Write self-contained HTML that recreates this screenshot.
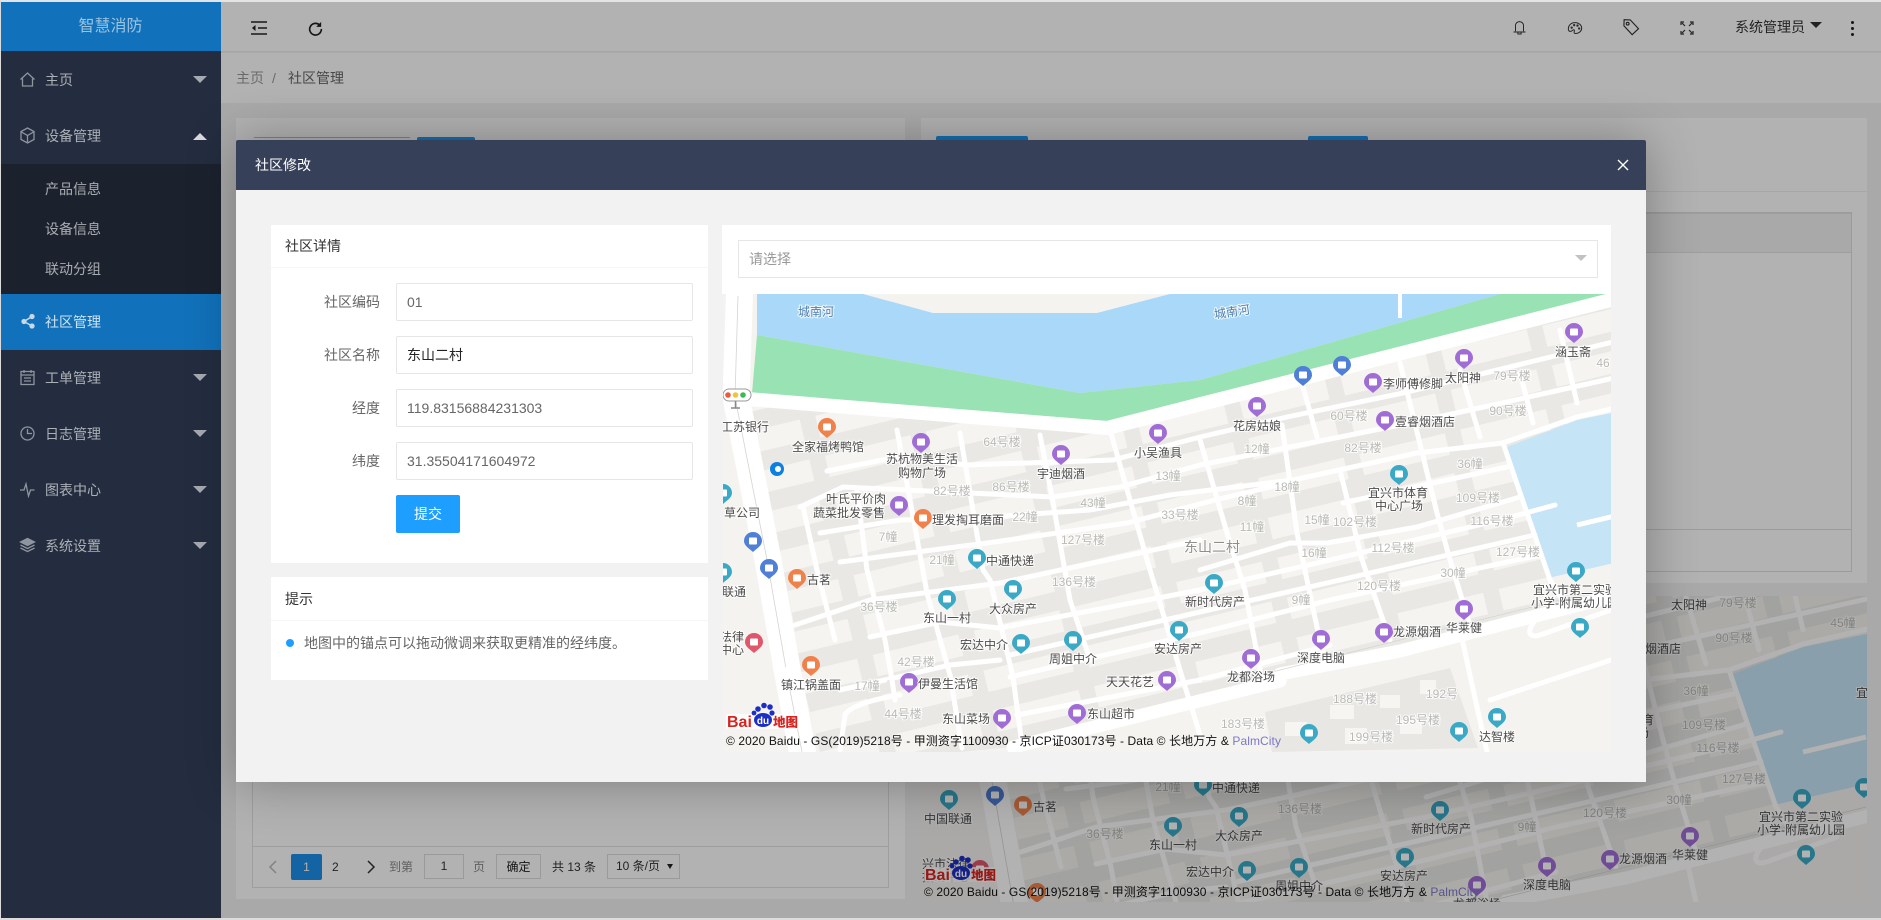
<!DOCTYPE html>
<html lang="zh-CN"><head><meta charset="utf-8"><title>社区管理</title>
<style>
html,body{margin:0;padding:0;width:1881px;height:920px;overflow:hidden;background:#f2f2f2}
body{font:14px "Liberation Sans","Noto Sans CJK SC",sans-serif;color:#333;position:relative}
div,span,svg{position:absolute;box-sizing:border-box}
.t{white-space:nowrap;line-height:20px}
#ov{left:0;top:0;width:1881px;height:920px;background:rgba(0,0,0,.3)}
#sb{left:0;top:0;width:221px;height:920px;background:#232d3f;color:rgba(255,255,255,.62)}
#sb .i{left:45px}
#sb svg{left:19px;width:17px;height:17px;fill:none;stroke:#8f959e;stroke-width:1.3}
.ar{left:193px;width:0;height:0;border-left:7px solid transparent;border-right:7px solid transparent;border-top:7px solid #a5a9b0}
.ar.u{border-top:0;border-bottom:7px solid #a5a9b0}
.card{background:#fff}
.inp{left:396px;width:297px;height:38px;background:#fff;border:1px solid #e6e6e6;border-radius:2px;padding-left:10px;line-height:36px;color:#666;font-size:14px}
.lb{width:80px;left:300px;text-align:right;color:#666;line-height:20px}
.l{font:12px "Liberation Sans","Noto Sans CJK SC",sans-serif;fill:#4c4c4c;text-anchor:middle;paint-order:stroke;stroke:#fff;stroke-width:2px;stroke-opacity:.8}
.g{fill:#b9b9b5}
.c{font:12px "Liberation Sans","Noto Sans CJK SC",sans-serif;fill:#111;letter-spacing:.09px}
.hi{fill:none;stroke:#333;stroke-width:1.2}
</style></head><body>

<!-- page behind overlay -->
<div style="left:221px;top:0;width:1660px;height:52px;background:#fff;border-bottom:1px solid #eee"></div>
<div style="left:221px;top:53px;width:1660px;height:50px;background:#fff"></div>
<svg style="left:251px;top:21px" width="16" height="14" viewBox="0 0 16 14"><path d="M0 1h16M7 7h9M0 13h16" stroke="#222" stroke-width="1.600"/><path d="M4.500 4L1 7l3.500 3z" fill="#222"/></svg>
<svg style="left:308px;top:21px" width="15" height="15" viewBox="0 0 18 18"><path d="M14.500 5.500A7 7 0 1 0 16 9.500" fill="none" stroke="#222" stroke-width="2"/><path d="M15.800 1v6h-6z" fill="#222"/></svg>
<svg class="hi" style="left:1512px;top:20px" width="15" height="16" viewBox="0 0 18 20"><path d="M4 14V7a5 5 0 0 1 10 0v7M1.500 15h15M7 15v2.500h4V15"/></svg>
<svg class="hi" style="left:1567px;top:21px" width="16" height="15" viewBox="0 0 18 18"><path d="M9 2C4 2 1 5.500 1 9.500c0 2 1.200 3 2.500 3 2 0 2.500-2 4-2 1 0 .8 1.500.5 2.500-.3 1 .2 2 1.500 2C14 15 17 12 17 8.500 17 5 13.500 2 9 2z"/><circle cx="5" cy="8" r=".8"/><circle cx="8" cy="5" r=".8"/><circle cx="12" cy="5.500" r=".8"/><circle cx="14" cy="9" r=".8"/></svg>
<svg class="hi" style="left:1622px;top:18px" width="18" height="18" viewBox="0 0 19 19"><path d="M2 2h6.500l9 9-6.500 6.500-9-9z" transform="rotate(2 9 9)"/><circle cx="6" cy="6" r="1.500"/></svg>
<svg class="hi" style="left:1680px;top:21px" width="14" height="14" viewBox="0 0 14 14" stroke-width="1"><path d="M1 4V1h3M10 1h3v3M13 10v3h-3M4 13H1v-3M2 2l3 3M12 2L9 5M12 12L9 9M2 12l3-3"/></svg>
<div class="t" style="left:1735px;top:17px;color:#333">系统管理员</div>
<div class="ar" style="left:1810px;top:22px;border-left:6px solid transparent;border-right:6px solid transparent;border-top:6px solid #333"></div>
<div style="left:1851px;top:21px;width:3px;height:3px;border-radius:50%;background:#222;box-shadow:0 6px 0 #222,0 12px 0 #222"></div>
<div class="t" style="left:236px;top:68px;color:#999">主页</div>
<div class="t" style="left:272px;top:68px;color:#999">/</div>
<div class="t" style="left:288px;top:68px;color:#666">社区管理</div>

<!-- left card behind -->
<div class="card" style="left:236px;top:118px;width:669px;height:781px"></div>
<div style="left:254px;top:137px;width:156px;height:1px;background:#bbb"></div>
<div style="left:417px;top:137px;width:58px;height:10px;background:#1e9fff;border-radius:2px"></div>
<div style="left:252px;top:150px;width:637px;height:738px;border:1px solid #e2e2e2"></div>
<div style="left:253px;top:846px;width:635px;height:1px;background:#e2e2e2"></div>
<svg style="left:268px;top:860px" width="10" height="14" viewBox="0 0 10 14"><path d="M8 1L2 7l6 6" fill="none" stroke="#bbb" stroke-width="1.500"/></svg>
<div style="left:291px;top:854px;width:31px;height:26px;background:#1e8fe8;border-radius:2px;color:#fff;text-align:center;line-height:26px;font-size:12px">1</div>
<div class="t" style="left:332px;top:857px;font-size:12px">2</div>
<svg style="left:366px;top:860px" width="10" height="14" viewBox="0 0 10 14"><path d="M2 1l6 6-6 6" fill="none" stroke="#333" stroke-width="1.500"/></svg>
<div class="t" style="left:389px;top:857px;font-size:12px;color:#888">到第</div>
<div style="left:424px;top:854px;width:40px;height:25px;border:1px solid #ddd;text-align:center;line-height:23px;font-size:12px">1</div>
<div class="t" style="left:473px;top:857px;font-size:12px;color:#888">页</div>
<div style="left:496px;top:854px;width:45px;height:25px;border:1px solid #ddd;text-align:center;line-height:25px;font-size:12px;color:#222">确定</div>
<div class="t" style="left:552px;top:857px;font-size:12px">共 13 条</div>
<div style="left:607px;top:854px;width:73px;height:25px;border:1px solid #ddd;line-height:23px;font-size:12px;padding-left:8px;color:#333">10 条/页</div>
<div style="left:667px;top:864px;width:0;height:0;border-left:3px solid transparent;border-right:3px solid transparent;border-top:5px solid #222"></div>

<!-- right card behind -->
<div class="card" style="left:921px;top:118px;width:946px;height:465px"></div>
<div style="left:936px;top:136px;width:92px;height:20px;background:#1e9fff;border-radius:2px"></div>
<div style="left:1308px;top:136px;width:60px;height:20px;background:#1e9fff;border-radius:2px"></div>
<div style="left:921px;top:191px;width:946px;height:1px;background:#f0f0f0"></div>
<div style="left:936px;top:212px;width:916px;height:360px;border:1px solid #dedede"></div>
<div style="left:937px;top:213px;width:914px;height:40px;background:#f2f2f2;border-bottom:1px solid #e2e2e2;border-top:1px solid #e2e2e2"></div>
<div style="left:937px;top:529px;width:914px;height:1px;background:#e0e0e0"></div>

<!-- shared map defs -->
<svg style="left:0;top:0" width="0" height="0">
<defs>
<pattern id="bp" width="104" height="41" patternUnits="userSpaceOnUse" patternTransform="rotate(-13.500 1000 500)">
<rect x="8" y="6" width="88" height="22" fill="#f6f4f0"/>
</pattern>
<g id="pin"><path d="M-9 0a9 9 0 1 1 18 0c0 5-6 8-9 11c-3-3-9-6-9-11z"/><rect x="-4" y="-3.500" width="8" height="7" rx="1" fill="#fff"/></g>
<g id="bl">
<rect x="726" y="714" width="72" height="15" rx="2" fill="#fff" opacity=".75"/>
<text x="727" y="727" style="font:bold 16px 'Liberation Sans',sans-serif;fill:#d8231f;paint-order:stroke;stroke:#fff;stroke-width:2.500px">Bai</text>
<g fill="#1c2fc4"><ellipse cx="763" cy="720" rx="9" ry="7"/><circle cx="758" cy="709" r="2.800"/><circle cx="764" cy="705.500" r="2.800"/><circle cx="770" cy="707" r="2.800"/><circle cx="772" cy="713" r="2.600"/><circle cx="754" cy="713" r="2.400"/></g>
<text x="763" y="724" text-anchor="middle" style="font:bold 10px 'Liberation Sans',sans-serif;fill:#fff">du</text>
<text x="773" y="726.500" style="font:900 12.500px 'Noto Sans CJK SC',sans-serif;fill:#d8231f;paint-order:stroke;stroke:#fff;stroke-width:1.500px">地图</text>
</g>
<g id="mb">
<rect x="690" y="290" width="960" height="390" fill="#f5f3ef"/>
<path d="M757 294H863L933 313H1097L1170 294H1500L1200 380L1080 393L757 335Z" fill="#a9d8f9"/>
<path d="M757 335L1080 393L1200 380L1500 294H1610L1200 397L1107 421L752 393Z" fill="#99e2b4"/>
<rect x="1398" y="294" width="4" height="24" fill="#fff"/>
<path id="gp" d="M752 405L1107 435L1650 295V420L1510 450L1550 585L1611 600L1280 680H802L790 600L745 420Z" fill="#e9e8e5"/>
<path d="M752 405L1107 435L1650 295V420L1510 450L1550 585L1611 600L1280 680H802L790 600L745 420Z" fill="url(#bp)"/>
<path d="M1507 447L1577 420L1650 405V555L1548 578Z" fill="#c5e4f5"/>
<path d="M1577 525L1640 510" stroke="#fff" stroke-width="5"/>
<g fill="none" stroke="#fff" stroke-linejoin="round" stroke-linecap="round">
<path stroke-width="14" d="M748 399L1107 428L1650 290"/>
<path stroke-width="27" d="M740 280L736 397L768 560L789 680"/>
<path stroke-width="13" d="M1280 674L1400 651L1520 620L1650 587"/>
<g stroke-width="5">
<path d="M827 471L897 457L967 465L1113 460L1200 437L1287 417L1403 393L1567 353L1650 333"/>
<path d="M800 507L843 487L907 490L1053 497L1120 487L1200 465L1290 447L1415 422L1470 410L1560 390L1650 370"/>
<path d="M820 533L900 520L990 517L1090 510L1170 495L1293 480L1417 453L1503 443L1577 417L1650 400"/>
<path d="M840 562L987 543L1127 523L1215 500L1283 484"/>
<path d="M1343 503L1433 483L1507 467"/>
<path d="M1200 570L1290 543L1327 543L1417 527L1520 497"/>
<path d="M795 625L870 600L1000 583L1200 540"/>
<path d="M870 637L940 622L1000 628L1200 590L1330 560L1500 520L1555 505"/>
<path d="M1010 655L1200 612L1340 580L1535 535"/>
<path d="M1010 677L1200 633L1330 600L1540 555"/>
<path d="M1200 680L1330 645"/>
<path d="M885 680L950 665L1000 660"/>
<path d="M960 433L983 570L990 580L1013 677"/>
<path d="M1110 430L1150 570L1183 680"/>
<path d="M897 430L910 500L927 593L950 675"/>
<path d="M1200 440L1227 533L1245 590L1262 680"/>
<path d="M1282 425L1297 533L1307 580L1325 665"/>
<path d="M1303 387L1317 437"/>
<path d="M1400 363L1437 513L1450 560L1470 625"/>
<path d="M1460 370L1480 437"/>
<path d="M1520 373L1533 423"/>
<path d="M1560 330L1577 403"/>
<path d="M1503 443L1550 580L1570 612"/>
<path d="M1463 643L1471 680"/>
<path d="M803 507L817 570L835 640"/>
<path d="M857 490L867 570L885 640L892 680"/>
<path d="M1040 435L1052 497L1070 600L1090 660"/>
<path d="M1340 470L1362 560L1390 640"/>
<path d="M1550 607C1525 625 1525 640 1540 635L1611 610"/>
</g></g>
<g fill="none" stroke="#d4d4d1" stroke-width=".8"><path d="M738 296L735 397L767 560L788 680"/><path d="M1240 680L1640 580"/></g>
</g>
<g id="mbLow">
<rect x="690" y="680" width="960" height="75" fill="#f5f3ef"/>
<path d="M802 680H1280L1013 747L960 752H820Z" fill="#e9e8e5"/>
<path d="M802 680H1280L1013 747L960 752H820Z" fill="url(#bp)"/>
<path d="M1265 712L1450 668L1478 748L1272 752Z" fill="#e8e7e4"/>
<g fill="#f7f5f1"><rect x="1285" y="722" width="22" height="14"/><rect x="1330" y="705" width="24" height="14"/><rect x="1380" y="695" width="20" height="13"/><rect x="1420" y="680" width="16" height="14"/><rect x="1345" y="728" width="22" height="16"/><rect x="1400" y="720" width="22" height="14"/></g>
<g fill="none" stroke="#fff" stroke-linejoin="round" stroke-linecap="round">
<path stroke-width="27" d="M789 680L803 755"/>
<path stroke-width="13" d="M1013 747L1280 681"/>
<g stroke-width="5">
<path d="M1017 715L1200 680"/><path d="M840 690L885 680"/>
<path d="M1013 677L1022 745"/><path d="M1183 680L1200 735"/><path d="M950 675L962 748"/>
<path d="M1471 680L1487 752"/><path d="M892 680L895 700"/>
<path d="M1490 700L1611 660"/><path d="M840 750L845 715C850 705 880 698 900 695"/>
</g></g>
<path d="M788 680L802 752" fill="none" stroke="#d4d4d1" stroke-width=".8"/>
</g>
<g id="pins">
<g fill="#a06dd6">
<use href="#pin" x="921" y="442"/><use href="#pin" x="1061" y="454"/><use href="#pin" x="1158" y="433"/><use href="#pin" x="899" y="505"/>
<use href="#pin" x="1373" y="382"/><use href="#pin" x="1464" y="358"/><use href="#pin" x="1574" y="332"/><use href="#pin" x="1257" y="406"/><use href="#pin" x="1385" y="420"/>
<use href="#pin" x="1464" y="609"/><use href="#pin" x="1384" y="632"/><use href="#pin" x="1321" y="639"/><use href="#pin" x="1251" y="658"/>
</g>
<g fill="#39a9c6">
<use href="#pin" x="977" y="558"/><use href="#pin" x="1399" y="474"/><use href="#pin" x="1576" y="571"/><use href="#pin" x="947" y="599"/><use href="#pin" x="1013" y="589"/><use href="#pin" x="1214" y="583"/>
<use href="#pin" x="1021" y="643"/><use href="#pin" x="1073" y="640"/><use href="#pin" x="1179" y="630"/><use href="#pin" x="1580" y="627"/><use href="#pin" x="723" y="572"/><use href="#pin" x="723" y="493"/><use href="#pin" x="1638" y="560"/>
</g>
<g fill="#f0814a"><use href="#pin" x="827" y="427"/><use href="#pin" x="923" y="518"/><use href="#pin" x="797" y="578"/><use href="#pin" x="811" y="665"/></g>
<g fill="#4f7fd6"><use href="#pin" x="753" y="541"/><use href="#pin" x="769" y="568"/><use href="#pin" x="1303" y="375"/><use href="#pin" x="1342" y="365"/></g>
<use href="#pin" x="754" y="642" fill="#e0566a"/>
</g>
<g id="pinsLow">
<g fill="#a06dd6"><use href="#pin" x="909" y="682"/><use href="#pin" x="1167" y="680"/><use href="#pin" x="1002" y="718"/><use href="#pin" x="1077" y="713"/></g>
<g fill="#39a9c6"><use href="#pin" x="1497" y="717"/><use href="#pin" x="1459" y="731"/><use href="#pin" x="1309" y="733"/></g>
</g>
</defs>
</svg>

<!-- background map -->
<svg style="left:921px;top:596px" width="946" height="306" viewBox="695 369 946 306">
<use href="#mb"/><use href="#pins"/>
<g>
<text class="l" x="1463" y="382">太阳神</text><text class="l g" x="1512" y="380">79号楼</text><text class="l g" x="1617" y="400">45幢</text>
<text class="l" x="1425" y="426">壹睿烟酒店</text><text class="l g" x="1508" y="415">90号楼</text><text class="l g" x="1470" y="468">36幢</text>
<text class="l" x="1398" y="497">宜兴市体育</text><text class="l" x="1399" y="510">中心广场</text><text class="l g" x="1478" y="502">109号楼</text><text class="l g" x="1492" y="525">116号楼</text><text class="l g" x="1518" y="556">127号楼</text><text class="l g" x="1453" y="577">30幢</text><text class="l g" x="1379" y="590">120号楼</text><text class="l g" x="1301" y="604">9幢</text>
<text class="l" x="1636" y="470">宜</text>
<text class="l" x="1575" y="594">宜兴市第二实验</text><text class="l" x="1575" y="607">小学-附属幼儿园</text>
<text class="l" x="1464" y="632">华莱健</text><text class="l" x="1417" y="636">龙源烟酒</text><text class="l" x="1321" y="662">深度电脑</text><text class="l" x="1251" y="681">龙都浴场</text>
<text class="l" x="1010" y="565">中通快递</text><text class="l g" x="1074" y="586">136号楼</text><text class="l" x="1013" y="613">大众房产</text><text class="l" x="1215" y="606">新时代房产</text>
<text class="l" x="947" y="622">东山一村</text><text class="l" x="722" y="596">中国联通</text><text class="l" x="819" y="584">古茗</text><text class="l g" x="879" y="611">36号楼</text><text class="l" x="984" y="649">宏达中介</text><text class="l" x="1073" y="663">周姐中介</text><text class="l" x="1178" y="653">安达房产</text>
<text class="l g" x="942" y="564">21幢</text>
<text class="l" x="720" y="641">兴市法律</text><text class="l" x="720" y="654">援助中心</text>
</g></svg>
<svg style="left:923px;top:854px" width="140" height="32" viewBox="725 701 140 32"><use href="#bl"/></svg>
<svg style="left:923px;top:880px" width="620" height="22" viewBox="0 0 620 22">
<text class="c" x="1" y="16">© 2020 Baidu - GS(2019)5218号 - 甲测资字1100930 - 京ICP证030173号 - Data © 长地万方 &amp; <tspan fill="#7a78c8">PalmCity</tspan></text></svg>

<div id="ov"></div>

<!-- sidebar -->
<div id="sb">
<div style="left:0;top:0;width:221px;height:51px;background:#1171ba;text-align:center;line-height:54px;font-size:16px;color:rgba(255,255,255,.58)">智慧消防</div>
<div style="left:0;top:164px;width:221px;height:130px;background:#1b222e"></div>
<div style="left:0;top:294px;width:221px;height:56px;background:#1171ba"></div>

<svg style="top:71px" viewBox="0 0 17 17"><path d="M1.500 8.500L8.500 2l7 6.500M3.500 7.500V15h10V7.500"/></svg>
<div class="t i" style="top:70px">主页</div><div class="ar" style="top:76px"></div>
<svg style="top:127px" viewBox="0 0 17 17"><path d="M8.500 1L15 4.500v8L8.500 16 2 12.500v-8zM2.500 5l6 3.500 6-3.500M8.500 8.500V15"/></svg>
<div class="t i" style="top:126px">设备管理</div><div class="ar u" style="top:133px;border-bottom-color:#d8dadd"></div>
<div class="t i" style="top:179px">产品信息</div>
<div class="t i" style="top:219px">设备信息</div>
<div class="t i" style="top:259px">联动分组</div>
<svg style="top:313px;fill:#c8d8e8;stroke:#c8d8e8" viewBox="0 0 17 17"><circle cx="13" cy="3.500" r="2"/><circle cx="13" cy="13" r="2"/><circle cx="5" cy="8.500" r="2"/><path d="M13 3.500L5 8.500l8 4.500" fill="none" stroke-width="1.500"/></svg>
<div class="t i" style="top:312px;color:rgba(255,255,255,.8)">社区管理</div>
<svg style="top:369px" viewBox="0 0 17 17"><path d="M2 2.500h13v13H2zM5 1v3M12 1v3M2 6h13M5 9h7M5 12h7"/></svg>
<div class="t i" style="top:368px">工单管理</div><div class="ar" style="top:374px"></div>
<svg style="top:425px" viewBox="0 0 17 17"><circle cx="8.500" cy="8.500" r="6.500"/><path d="M8.500 4v4.500H13"/></svg>
<div class="t i" style="top:424px">日志管理</div><div class="ar" style="top:430px"></div>
<svg style="top:481px" viewBox="0 0 17 17"><path d="M1 9h4l2-6 2.500 12 2-6h4"/></svg>
<div class="t i" style="top:480px">图表中心</div><div class="ar" style="top:486px"></div>
<svg style="top:537px;fill:#8f959e" viewBox="0 0 17 17"><path d="M8.500 1.500l7 3.500-7 3.500L1.500 5z"/><path d="M1.500 8l7 3.500 7-3.500M1.500 11l7 3.500 7-3.500" fill="none"/></svg>
<div class="t i" style="top:536px">系统设置</div><div class="ar" style="top:542px"></div>
</div>

<!-- modal -->
<div style="left:236px;top:140px;width:1410px;height:642px;background:#f2f2f2;box-shadow:1px 1px 50px rgba(0,0,0,.3);border-radius:2px 2px 0 0">
<div style="left:0;top:0;width:1410px;height:50px;background:#364058;border-radius:2px 2px 0 0"></div>
<div class="t" style="left:19px;top:15px;color:#fff">社区修改</div>
<svg style="left:1380px;top:18px" width="14" height="14" viewBox="0 0 14 14"><path d="M2 2l10 10M12 2L2 12" stroke="#fff" stroke-width="1.400"/></svg>
</div>

<div class="card" style="left:271px;top:225px;width:437px;height:338px"></div>
<div class="t" style="left:285px;top:236px;color:#333">社区详情</div>
<div style="left:271px;top:267px;width:437px;height:1px;background:#f6f6f6"></div>
<div class="lb" style="top:292px">社区编码</div><div class="inp" style="top:283px">01</div>
<div class="lb" style="top:345px">社区名称</div><div class="inp" style="top:336px;color:#222">东山二村</div>
<div class="lb" style="top:398px">经度</div><div class="inp" style="top:389px">119.83156884231303</div>
<div class="lb" style="top:451px">纬度</div><div class="inp" style="top:442px">31.35504171604972</div>
<div style="left:396px;top:495px;width:64px;height:38px;background:#1e9fff;border-radius:2px;color:#fff;text-align:center;line-height:38px">提交</div>

<div class="card" style="left:271px;top:577px;width:437px;height:103px"></div>
<div class="t" style="left:285px;top:589px;color:#333">提示</div>
<div style="left:271px;top:620px;width:437px;height:1px;background:#f6f6f6"></div>
<div style="left:286px;top:639px;width:8px;height:8px;border-radius:50%;background:#1e9fff"></div>
<div class="t" style="left:304px;top:633px;color:#666">地图中的锚点可以拖动微调来获取更精准的经纬度。</div>

<div class="card" style="left:722px;top:225px;width:889px;height:69px"></div>
<div style="left:738px;top:240px;width:860px;height:38px;border:1px solid #e6e6e6;background:#fff"></div>
<div class="t" style="left:749px;top:249px;color:#999">请选择</div>
<div style="left:1575px;top:255px;width:0;height:0;border-left:6px solid transparent;border-right:6px solid transparent;border-top:6px solid #c2c2c2"></div>

<!-- modal map -->
<svg style="left:723px;top:294px" width="888" height="458" viewBox="723 294 888 458">
<use href="#mb"/><use href="#mbLow"/><use href="#pins"/><use href="#pinsLow"/>
<g>
<rect x="723" y="389" width="28" height="12" rx="6" fill="#fff" stroke="#999"/><circle cx="728" cy="395" r="2.800" fill="#ea5a3c"/><circle cx="735.500" cy="395" r="2.800" fill="#f3c33c"/><circle cx="743" cy="395" r="2.800" fill="#3cba54"/><path d="M735.500 401v7M731 408h9" stroke="#888" stroke-width="1.500"/>
<circle cx="777" cy="469" r="7" fill="#0d7fe0"/><circle cx="778" cy="469" r="3" fill="#fff"/>
</g>
<g>
<text class="l" x="816" y="316" style="fill:#4f7eae">城南河</text>
<text class="l" x="1232" y="316" transform="rotate(-8 1232 312)" style="fill:#4f7eae">城南河</text>
<text class="l" x="745" y="431">工苏银行</text><text class="l" x="828" y="451">全家福烤鸭馆</text>
<text class="l" x="922" y="463">苏杭物美生活</text><text class="l" x="922" y="477">购物广场</text>
<text class="l g" x="1002" y="446">64号楼</text><text class="l" x="1061" y="478">宇迪烟酒</text><text class="l" x="1158" y="457">小吴渔具</text><text class="l g" x="1168" y="480">13幢</text>
<text class="l g" x="952" y="495">82号楼</text><text class="l g" x="1011" y="491">86号楼</text><text class="l" x="856" y="503">叶氏平价肉</text><text class="l" x="849" y="517">蔬菜批发零售</text>
<text class="l" x="968" y="524">理发掏耳磨面</text><text class="l g" x="1025" y="521">22幢</text><text class="l g" x="1093" y="507">43幢</text><text class="l g" x="1180" y="519">33号楼</text><text class="l g" x="888" y="541">7幢</text><text class="l g" x="1083" y="544">127号楼</text><text class="l g" x="942" y="564">21幢</text><text class="l" x="1010" y="565">中通快递</text>
<text class="l" x="742" y="517">草公司</text>
<text class="l" x="1212" y="552" style="font-size:14px;fill:#8f8f8c">东山二村</text>
<text class="l" x="819" y="584">古茗</text><text class="l" x="734" y="596">联通</text><text class="l" x="947" y="622">东山一村</text><text class="l" x="1013" y="613">大众房产</text><text class="l g" x="1074" y="586">136号楼</text><text class="l g" x="879" y="611">36号楼</text><text class="l" x="1215" y="606">新时代房产</text>
<text class="l" x="732" y="641">法律</text><text class="l" x="732" y="654">中心</text><text class="l" x="811" y="689">镇江锅盖面</text><text class="l" x="984" y="649">宏达中介</text><text class="l" x="1073" y="663">周姐中介</text><text class="l" x="1178" y="653">安达房产</text>
<text class="l g" x="916" y="666">42号楼</text><text class="l g" x="867" y="690">17幢</text><text class="l" x="948" y="688">伊曼生活馆</text><text class="l" x="1130" y="686">天天花艺</text><text class="l g" x="903" y="718">44号楼</text><text class="l" x="966" y="723">东山菜场</text><text class="l" x="1111" y="718">东山超市</text>
<text class="l" x="1413" y="388">李师傅修脚</text><text class="l" x="1463" y="382">太阳神</text><text class="l g" x="1512" y="380">79号楼</text><text class="l" x="1573" y="356">涵玉斋</text><text class="l g" x="1603" y="367">46</text><text class="l" x="1257" y="430">花房姑娘</text><text class="l g" x="1349" y="420">60号楼</text><text class="l" x="1425" y="426">壹睿烟酒店</text><text class="l g" x="1508" y="415">90号楼</text><text class="l g" x="1257" y="453">12幢</text><text class="l g" x="1363" y="452">82号楼</text><text class="l g" x="1470" y="468">36幢</text>
<text class="l" x="1398" y="497">宜兴市体育</text><text class="l" x="1399" y="510">中心广场</text><text class="l g" x="1287" y="491">18幢</text><text class="l g" x="1478" y="502">109号楼</text><text class="l g" x="1247" y="505">8幢</text><text class="l g" x="1317" y="524">15幢</text><text class="l g" x="1355" y="526">102号楼</text><text class="l g" x="1492" y="525">116号楼</text><text class="l g" x="1252" y="531">11幢</text><text class="l g" x="1314" y="557">16幢</text><text class="l g" x="1393" y="552">112号楼</text><text class="l g" x="1518" y="556">127号楼</text><text class="l g" x="1453" y="577">30幢</text>
<text class="l g" x="1379" y="590">120号楼</text><text class="l g" x="1301" y="604">9幢</text><text class="l" x="1575" y="594">宜兴市第二实验</text><text class="l" x="1575" y="607">小学-附属幼儿园</text><text class="l" x="1464" y="632">华莱健</text><text class="l" x="1417" y="636">龙源烟酒</text><text class="l" x="1321" y="662">深度电脑</text><text class="l" x="1251" y="681">龙都浴场</text>
<text class="l g" x="1355" y="703">188号楼</text><text class="l g" x="1442" y="698">192号</text><text class="l g" x="1418" y="724">195号楼</text><text class="l g" x="1243" y="728">183号楼</text><text class="l g" x="1371" y="741">199号楼</text><text class="l" x="1497" y="741">达智楼</text>
</g>
<use href="#bl"/>
<text class="c" x="726" y="745">© 2020 Baidu - GS(2019)5218号 - 甲测资字1100930 - 京ICP证030173号 - Data © 长地万方 &amp; <tspan fill="#7a78c8">PalmCity</tspan></text>
</svg>

<!-- edge lines -->
<div style="left:0;top:0;width:1881px;height:2px;background:#e4e4e4"></div>
<div style="left:0;top:0;width:1px;height:920px;background:#dcdcdc"></div>
<div style="left:0;top:918px;width:1881px;height:2px;background:#dcdcdc"></div>
</body></html>
